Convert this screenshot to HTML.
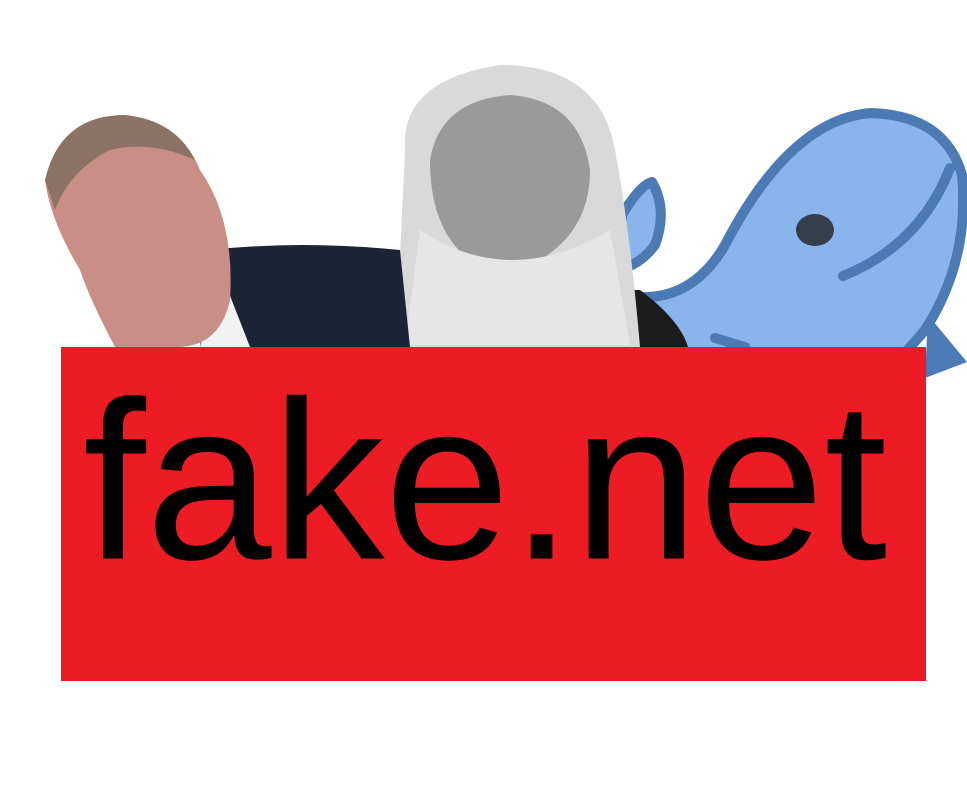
<!DOCTYPE html>
<html><head><style>
html,body{margin:0;padding:0;background:#fff;width:967px;height:800px;overflow:hidden}
.t{position:absolute;left:61px;top:347px;width:865px;height:334px;background:#ed1c24}
.t span{position:absolute;left:22px;top:0;font-family:"Liberation Sans",sans-serif;font-size:226px;line-height:1;color:#000;top:190px;transform:translateY(-75%)}
</style></head><body>
<svg width="967" height="800" style="position:absolute;left:0;top:0">
<!-- whale -->
<path d="M928 315 L967 362 L925 378 Z" fill="#4b7ab5"/>
<path d="M622 215 Q640 185 652 182 Q668 210 655 245 Q640 265 618 270 Z" fill="#89b4ec" stroke="#4b7ab5" stroke-width="10" stroke-linejoin="round"/>
<path d="M628 296 Q690 305 725 245 Q790 120 870 113 Q945 115 962 175 Q970 260 925 330 Q900 360 880 375 L640 360 Z" fill="#89b4ec" stroke="#4b7ab5" stroke-width="10"/>
<path d="M843 276 Q920 245 950 168" fill="none" stroke="#4b7ab5" stroke-width="10" stroke-linecap="round"/>
<path d="M715 338 L745 347" stroke="#4b7ab5" stroke-width="10" stroke-linecap="round"/>
<ellipse cx="815" cy="230" rx="19" ry="16" fill="#353f4c"/>
<!-- darwin -->
<path d="M330 347 Q350 300 410 290 L640 290 Q680 320 688 347 Z" fill="#1c1c1c"/>
<path d="M405 150 Q400 80 500 65 Q600 65 615 150 Q630 230 640 347 L395 347 Q400 260 405 150 Z" fill="#d9d9d9"/>
<path d="M430 160 Q440 100 510 95 Q580 100 590 170 Q590 230 540 260 L470 260 Q430 230 430 160 Z" fill="#9a9a9a"/>
<path d="M420 230 Q510 290 610 230 L630 345 L405 345 Z" fill="#e6e6e6"/>
<!-- man -->
<path d="M210 250 Q300 240 400 250 L410 347 L200 347 Z" fill="#1e2438"/>
<path d="M220 270 L250 347 L200 347 Z" fill="#f2f2f2"/>
<path d="M45 180 Q60 120 120 115 Q180 120 200 170 Q235 220 230 300 Q220 345 180 347 L115 347 Q90 300 80 270 Q50 220 45 180 Z" fill="#c98f86"/>
<path d="M45 180 Q60 115 125 115 Q175 120 195 160 Q150 140 110 150 Q70 170 55 210 Z" fill="#8d7266"/>
</svg>
<div class="t"><span>fake.net</span></div>
</body></html>
